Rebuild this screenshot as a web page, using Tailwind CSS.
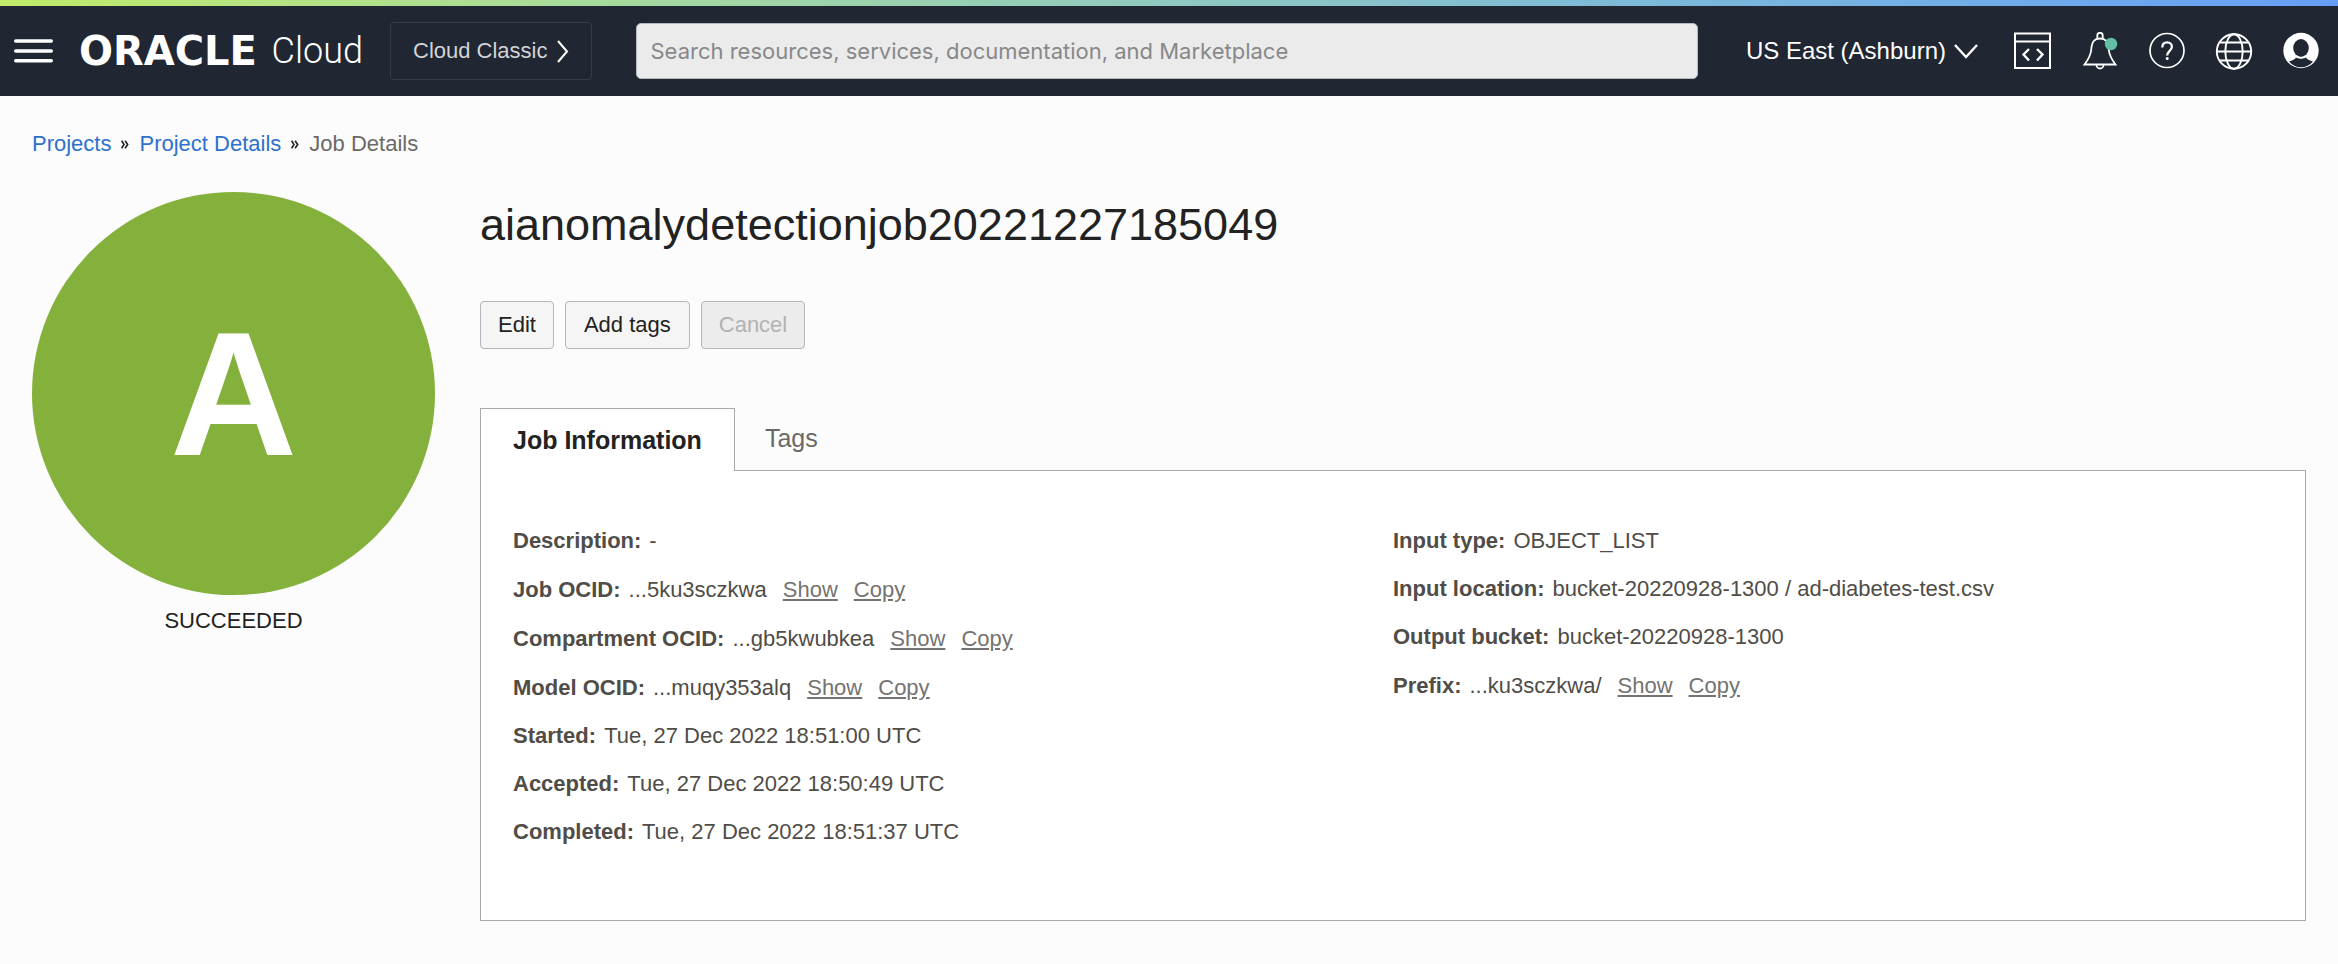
<!DOCTYPE html>
<html lang="en">
<head>
<meta charset="utf-8">
<title>Job Details - Oracle Cloud</title>
<script src="https://cdn.jsdelivr.net/npm/@tailwindcss/browser@4"></script>
</head>
<body class="min-h-screen bg-[#fcfcfc] font-['Liberation_Sans',Arial,sans-serif] text-[22px] leading-[26px] text-[#222]">
<div class="h-1.5 bg-linear-to-r from-[#c1eb68] to-[#659ff8]"></div>
<header class="flex h-[90px] items-center bg-[#202632] pl-3.5 pr-[18px] text-white">
  <button type="button" aria-label="Open menu" class="shrink-0">
    <svg class="block" width="39" height="26" viewBox="0 0 39 26" fill="none" stroke="#fff" stroke-width="3.4" stroke-linecap="round"><path d="M1.7 3h35.6M1.7 13h35.6M1.7 22.8h35.6"/></svg>
  </button>
  <a href="#" class="ml-[26px] flex w-[284px] shrink-0 items-center justify-between">
    <span class="font-['DejaVu_Sans',sans-serif] text-[40px] leading-10 font-bold">ORACLE</span>
    <span class="font-[Roboto,sans-serif] text-[36px] leading-10 font-light">Cloud</span>
  </a>
  <a href="#" class="ml-[27px] flex h-[58px] shrink-0 items-center gap-[9px] rounded-sm border border-[#363d49] px-[22px] text-[#d3d4d6]">
    Cloud Classic
    <svg width="12" height="24" viewBox="0 0 12 24" fill="none" stroke="#fff" stroke-width="2"><path d="M1 2l9 10.500L1 23"/></svg>
  </a>
  <input type="text" aria-label="Search" placeholder="Search resources, services, documentation, and Marketplace" class="ml-11 h-14 min-w-0 flex-1 rounded-[5px] border border-[#b4b8c0] bg-[#ebebeb] px-3.5 font-[Inter,sans-serif] text-[22px] placeholder:text-[#87888a]">
  <button type="button" class="ml-12 flex shrink-0 items-center gap-2 text-[24px]">
    US East (Ashburn)
    <svg width="24" height="18" viewBox="0 0 24 18" fill="none" stroke="#fff" stroke-width="2.400"><path d="M1 3l11 12L23 3"/></svg>
  </button>
  <div class="ml-9 flex shrink-0 items-center gap-[29px]">
    <button type="button" aria-label="Developer tools">
      <svg class="block" width="38" height="38" viewBox="0 0 38 38" fill="none" stroke="#fff" stroke-width="2"><path d="M1 1.500h35v34.500h-35zM1 9.500h35"/><path d="M15 17l-5.500 5.500 5.500 6M23 17l5.500 5.500-5.500 6" stroke-width="2.400"/></svg>
    </button>
    <button type="button" aria-label="Notifications">
      <svg class="block" width="38" height="38" viewBox="0 0 38 38" fill="none" stroke="#fff" stroke-width="1.800"><path d="M16.300 6.500V3.500a2.700 2.700 0 0 1 5.400 0v3M3.500 32.500c4.500-6 6.200-9 6.700-14.500C10.700 10 13 6.500 19 6.500S27.300 10 27.800 18c.5 5.500 2.200 8.500 6.700 14.500z"/><path d="M15.500 33a3.500 3.500 0 0 0 7 0"/><circle cx="30" cy="12" r="6.200" fill="#62bfa4" stroke="none"/></svg>
    </button>
    <button type="button" aria-label="Help">
      <svg class="block" width="38" height="38" viewBox="0 0 38 38" fill="none" stroke="#fff" stroke-width="1.700"><circle cx="19" cy="18.500" r="17"/><path d="M14.300 15.500c0-3.300 2-5.200 4.800-5.200s4.800 1.800 4.800 4.500c0 4-4.700 4.200-4.700 8.700" stroke-width="2.200"/><circle cx="19.200" cy="26.500" r="1.500" fill="#fff" stroke="none"/></svg>
    </button>
    <button type="button" aria-label="Language">
      <svg class="block" width="38" height="38" viewBox="0 0 38 38" fill="none" stroke="#fff" stroke-width="1.900"><circle cx="19" cy="19.500" r="17.200"/><ellipse cx="19" cy="19.500" rx="8.700" ry="17.200"/><path d="M1.800 19.500h34.400M4.500 10.500h29M4.500 28.500h29"/></svg>
    </button>
    <button type="button" aria-label="Profile">
      <svg class="block" width="38" height="38" viewBox="0 0 38 38"><circle cx="19" cy="18.500" r="17.700" fill="#fff"/><ellipse cx="19" cy="16" rx="7.800" ry="9" fill="#202632"/><path d="M14 25.500c1.500 1.500 8.500 1.500 10 0 .8 1.700 3.800 2.900 7 4-6 7.700-18 7.700-24 0 3.200-1.100 6.200-2.300 7-4z" fill="#202632"/><path d="M13.800 23.500c3 3 7.400 3 10.400 0" fill="none" stroke="#fff" stroke-width="1.500"/></svg>
    </button>
  </div>
</header>

<main class="px-8 pt-[35px]">
  <nav aria-label="Breadcrumb" class="flex items-center gap-2.5">
    <a href="#" class="text-[#2e71cd]">Projects</a>
    <svg width="8" height="9" viewBox="0 0 8 9" fill="none" stroke="#222" stroke-width="1.600"><path d="M.6.700L3 4.500.6 8.300M4.100.700l2.600 3.800-2.600 3.800"/></svg>
    <a href="#" class="text-[#2e71cd]">Project Details</a>
    <svg width="8" height="9" viewBox="0 0 8 9" fill="none" stroke="#222" stroke-width="1.600"><path d="M.6.700L3 4.500.6 8.300M4.100.700l2.600 3.800-2.600 3.800"/></svg>
    <span class="text-[#6b6966]">Job Details</span>
  </nav>

  <div class="mt-[35px] flex gap-[45px]">
    <aside class="w-[403px] shrink-0 text-center">
      <div class="flex aspect-square items-center justify-center rounded-full bg-[#84b13c] text-[176px] leading-none font-bold text-white">A</div>
      <p class="mt-[13px]">SUCCEEDED</p>
    </aside>

    <section class="min-w-0 flex-1">
      <h1 class="pt-1.5 text-[45px] leading-[54px]">aianomalydetectionjob20221227185049</h1>
      <div class="mt-[49px] flex gap-[11px]">
        <button type="button" class="h-12 rounded-sm border border-[#b4b5bd] bg-[#f5f5f5] px-[17px]">Edit</button>
        <button type="button" class="h-12 rounded-sm border border-[#b4b5bd] bg-[#f5f5f5] px-[18px]">Add tags</button>
        <button type="button" disabled class="h-12 rounded-sm border border-[#b4b5bd] bg-[#ececec] px-[17px] text-[#b2b2b2]">Cancel</button>
      </div>

      <div role="tablist" class="mt-[59px] flex text-[25px]">
        <button type="button" role="tab" aria-selected="true" class="z-10 -mb-px h-[63px] border border-b-0 border-[#a9a9a9] bg-white px-8 font-bold">Job Information</button>
        <button type="button" role="tab" aria-selected="false" class="h-[60px] px-[30px] text-[#6b6966]">Tags</button>
      </div>
      <div role="tabpanel" class="grid grid-cols-2 border border-[#a9a9a9] bg-white px-8 pt-[46px] pb-16 text-[#504c47]">
        <dl>
          <div class="flex h-12 items-center gap-2"><dt class="font-bold">Description:</dt><dd>-</dd></div>
          <div class="flex h-[49px] items-center gap-2"><dt class="font-bold">Job OCID:</dt><dd class="flex gap-4">...5ku3sczkwa <a href="#" class="text-[#757370] underline">Show</a> <a href="#" class="text-[#757370] underline">Copy</a></dd></div>
          <div class="flex h-[49px] items-center gap-2"><dt class="font-bold">Compartment OCID:</dt><dd class="flex gap-4">...gb5kwubkea <a href="#" class="text-[#757370] underline">Show</a> <a href="#" class="text-[#757370] underline">Copy</a></dd></div>
          <div class="flex h-[49px] items-center gap-2"><dt class="font-bold">Model OCID:</dt><dd class="flex gap-4">...muqy353alq <a href="#" class="text-[#757370] underline">Show</a> <a href="#" class="text-[#757370] underline">Copy</a></dd></div>
          <div class="flex h-12 items-center gap-2"><dt class="font-bold">Started:</dt><dd>Tue, 27 Dec 2022 18:51:00 UTC</dd></div>
          <div class="flex h-12 items-center gap-2"><dt class="font-bold">Accepted:</dt><dd>Tue, 27 Dec 2022 18:50:49 UTC</dd></div>
          <div class="flex h-12 items-center gap-2"><dt class="font-bold">Completed:</dt><dd>Tue, 27 Dec 2022 18:51:37 UTC</dd></div>
        </dl>
        <dl>
          <div class="flex h-12 items-center gap-2"><dt class="font-bold">Input type:</dt><dd>OBJECT_LIST</dd></div>
          <div class="flex h-12 items-center gap-2"><dt class="font-bold">Input location:</dt><dd>bucket-20220928-1300 / ad-diabetes-test.csv</dd></div>
          <div class="flex h-12 items-center gap-2"><dt class="font-bold">Output bucket:</dt><dd>bucket-20220928-1300</dd></div>
          <div class="flex h-[49px] items-center gap-2"><dt class="font-bold">Prefix:</dt><dd class="flex gap-4">...ku3sczkwa/ <a href="#" class="text-[#757370] underline">Show</a> <a href="#" class="text-[#757370] underline">Copy</a></dd></div>
        </dl>
      </div>
    </section>
  </div>
</main>
</body>
</html>
